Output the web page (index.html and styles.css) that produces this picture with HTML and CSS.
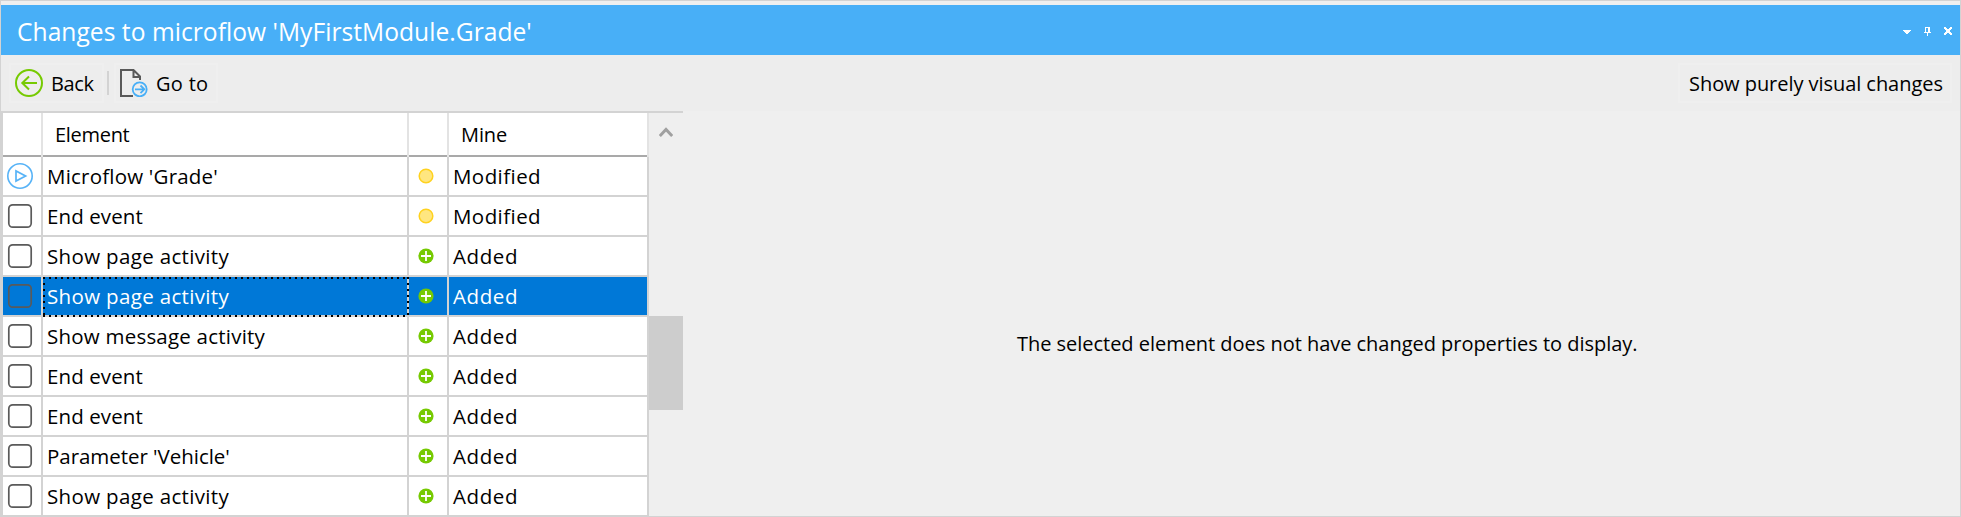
FILE: index.html
```
<!DOCTYPE html>
<html lang="en">
<head>
<meta charset="utf-8">
<title>Changes to microflow</title>
<link rel="stylesheet" href="styles.css">
</head>
<body>
<svg class="defs" width="0" height="0" aria-hidden="true">
  <symbol id="box" viewBox="0 0 26 26"><rect x="1.8" y="1.8" width="22.4" height="22.4" rx="4" fill="none" stroke="#5a5a5a" stroke-width="1.7"/></symbol>
  <symbol id="play" viewBox="0 0 26 26"><circle cx="13" cy="13" r="12.2" fill="none" stroke="#57b3f7" stroke-width="1.6"/><path d="M9 8v10l9.6-5z" fill="none" stroke="#57b3f7" stroke-width="1.7"/></symbol>
  <symbol id="mod" viewBox="0 0 16 16"><circle cx="8" cy="8" r="6.8" fill="#ffe680" stroke="#ffd21f" stroke-width="1.5"/></symbol>
  <symbol id="add" viewBox="0 0 16 16"><circle cx="8" cy="8" r="7.6" fill="#76ca02"/><path d="M3 8h10M8 3v10" stroke="#fff" stroke-width="1.8"/></symbol>
</svg>
<div class="window">
  <header class="titlebar">
    <h1 class="title">Changes to microflow 'MyFirstModule.Grade'</h1>
    <div class="controls">
      <svg width="8" height="4" viewBox="0 0 8 4"><path d="M0 0h8v1H7v1H6v1H5v1H3V3H2V2H1V1H0z" fill="#fff"/></svg>
      <svg width="7" height="9" viewBox="0 0 7 9"><path d="M1 0h5v5h1v1H4v3H3V6H0V5h1zM2 1v4h2V1z" fill="#fff" fill-rule="evenodd"/></svg>
      <svg width="8" height="8" viewBox="0 0 8 8"><path d="M0 0h2v1h1v1h2V1h1V0h2v2H7v1H6v2h1v1h1v2H6V7H5V6H3v1H2v1H0V6h1V5h1V3H1V2H0z" fill="#fff"/></svg>
    </div>
  </header>
  <nav class="toolbar">
    <div class="button back">
      <svg width="28" height="28" viewBox="0 0 28 28" fill="none" stroke="#76ca02" stroke-width="2"><circle cx="14" cy="14" r="13"/><path d="M22 14H7.5M14 7.5L7.3 14l6.7 6.5"/></svg>
      <span>Back</span>
    </div>
    <div class="separator"></div>
    <div class="button goto">
      <svg width="28" height="28" viewBox="0 0 28 28" fill="none" stroke="#595959" stroke-width="2"><path d="M13 27H1V1h12.5L20 7.5V11M13.5 1v7H20"/><g stroke="#48aff7" stroke-width="1.8"><circle cx="19.7" cy="20.3" r="7"/><path d="M15 20.3h9M20.5 16.5l3.8 3.8-3.8 3.8"/></g></svg>
      <span>Go to</span>
    </div>
    <div class="button visual"><span>Show purely visual changes</span></div>
  </nav>
  <main class="content">
    <section class="grid">
      <div class="row head"><div class="cell"></div><div class="cell element">Element</div><div class="cell"></div><div class="cell mine">Mine</div></div>
      <div class="row"><div class="cell icon"><svg width="26" height="26"><use href="#play"/></svg></div><div class="cell microflow">Microflow 'Grade'</div><div class="cell state"><svg width="16" height="16"><use href="#mod"/></svg></div><div class="cell modified">Modified</div></div>
      <div class="row"><div class="cell icon"><svg width="26" height="26"><use href="#box"/></svg></div><div class="cell end">End event</div><div class="cell state"><svg width="16" height="16"><use href="#mod"/></svg></div><div class="cell modified">Modified</div></div>
      <div class="row"><div class="cell icon"><svg width="26" height="26"><use href="#box"/></svg></div><div class="cell page">Show page activity</div><div class="cell state"><svg width="16" height="16"><use href="#add"/></svg></div><div class="cell added">Added</div></div>
      <div class="row selected"><div class="cell icon"><svg width="26" height="26"><use href="#box"/></svg></div><div class="cell page focus">Show page activity</div><div class="cell state"><svg width="16" height="16"><use href="#add"/></svg></div><div class="cell added">Added</div></div>
      <div class="row"><div class="cell icon"><svg width="26" height="26"><use href="#box"/></svg></div><div class="cell message">Show message activity</div><div class="cell state"><svg width="16" height="16"><use href="#add"/></svg></div><div class="cell added">Added</div></div>
      <div class="row"><div class="cell icon"><svg width="26" height="26"><use href="#box"/></svg></div><div class="cell end">End event</div><div class="cell state"><svg width="16" height="16"><use href="#add"/></svg></div><div class="cell added">Added</div></div>
      <div class="row"><div class="cell icon"><svg width="26" height="26"><use href="#box"/></svg></div><div class="cell end">End event</div><div class="cell state"><svg width="16" height="16"><use href="#add"/></svg></div><div class="cell added">Added</div></div>
      <div class="row"><div class="cell icon"><svg width="26" height="26"><use href="#box"/></svg></div><div class="cell parameter">Parameter 'Vehicle'</div><div class="cell state"><svg width="16" height="16"><use href="#add"/></svg></div><div class="cell added">Added</div></div>
      <div class="row"><div class="cell icon"><svg width="26" height="26"><use href="#box"/></svg></div><div class="cell page">Show page activity</div><div class="cell state"><svg width="16" height="16"><use href="#add"/></svg></div><div class="cell added">Added</div></div>
    </section>
    <div class="scrollbar">
      <svg width="14" height="10" viewBox="0 0 14 10"><path d="M0.8 9L7 2.4 13.2 9" fill="none" stroke="#a0a0a0" stroke-width="3"/></svg>
      <div class="thumb"></div>
    </div>
    <section class="details"><p class="message-text">The selected element does not have changed properties to display.</p></section>
  </main>
</div>
</body>
</html>
```
FILE: styles.css
```
* { box-sizing: border-box; }
body {
  margin: 0;
  font: 20px "Open Sans", "Noto Sans", sans-serif;
  color: #000;
  overflow: hidden;
}
.defs { display: block; }
svg { display: block; flex: none; }
.window {
  width: 1961px;
  height: 517px;
  background: #efefef;
  border: 1px solid #d3d3d3;
  padding-top: 4px;
  margin-top: -1px;
  height: 518px;
  border-top-width: 2px;
  display: flex;
  flex-direction: column;
}
.titlebar {
  height: 50px;
  flex: none;
  background: #48aff7;
  color: #fff;
  display: flex;
  justify-content: space-between;
  padding: 3px 8px 0 16px;
}
.title {
  margin: 0;
  font-size: 24.6px;
  font-weight: 400;
  line-height: 47px;
  letter-spacing: 0.03px;
}
.controls { display: flex; padding-top: 19px; }
.controls svg:nth-child(1) { margin: 3px 13px 0 0; }
.controls svg:nth-child(2) { margin-right: 13px; }
.toolbar {
  height: 56px;
  flex: none;
  background: #ededed;
  display: flex;
  padding: 8px 8px 0;
}
.button {
  height: 40px;
  border: 2px solid #efefef;
  display: flex;
  white-space: nowrap;
  line-height: 36px;
}
.button svg { margin-top: 4px; }
.button span { padding-top: 1px; }
.back { width: 95px; padding-left: 4px; }
.back span { margin-left: 8px; letter-spacing: -0.4px; }
.separator { width: 2px; height: 24px; margin: 8px 5px 0 3px; background: #d3d3d3; }
.goto { width: 104px; padding-left: 4px; }
.goto span { margin-left: 8px; letter-spacing: 0.3px; }
.visual { width: 274px; margin-left: auto; padding-left: 9px; letter-spacing: -0.05px; }
.content { flex: 1; display: flex; min-height: 0; }
.grid {
  width: 648px;
  padding: 2px 2px 0;
  background: #d3d3d3;
}
.row {
  display: grid;
  grid-template-columns: 38px 364px 38px 198px;
  gap: 2px;
  height: 38px;
  margin-bottom: 2px;
  font-size: 20.5px;
}
.cell {
  position: relative;
  background: #fff;
  line-height: 36px;
  padding: 1px 0 0 4px;
  white-space: nowrap;
}
.head { height: 44px; margin: 0 -2px 0 0; padding-right: 2px; background: #e3e3e3; font-size: 20px; }
.head .cell { line-height: 40px; padding-top: 2px; border-bottom: 2px solid #a9a9a9; }
.row .element { padding-left: 12px; letter-spacing: -0.3px; }
.row .mine { padding-left: 12px; letter-spacing: -0.1px; }
.row .icon { padding: 6px 0 0 4px; }
.row .state { padding: 11px 0 0 9px; }
.microflow { letter-spacing: 0.21px; }
.end { letter-spacing: 0.1px; }
.page { letter-spacing: 0.34px; }
.message { letter-spacing: 0.22px; }
.parameter { letter-spacing: -0.04px; }
.modified { letter-spacing: 0.43px; }
.added { letter-spacing: 0.6px; }
.selected .cell { background: #0078d7; color: #fff; }
.focus::after {
  content: "";
  position: absolute;
  inset: 0 -2px -2px 0;
  background:
    repeating-linear-gradient(90deg, #000 0 2px, transparent 2px 6px) 0 0 / 100% 2px no-repeat,
    repeating-linear-gradient(90deg, #000 0 2px, transparent 2px 6px) 0 100% / 100% 2px no-repeat,
    repeating-linear-gradient(#000 0 2px, transparent 2px 6px) 0 0 / 2px 100% no-repeat,
    repeating-linear-gradient(#000 0 2px, transparent 2px 6px) 100% 0 / 2px 100% no-repeat;
}
.scrollbar { width: 34px; border-top: 2px solid #d3d3d3; }
.scrollbar svg { margin: 14px 0 0 10px; }
.thumb { height: 94px; margin-top: 179px; background: #cdcdcd; }
.details { flex: 1; }
.message-text {
  margin: 208px 0 0;
  padding-left: 334px;
  line-height: 50px;
  letter-spacing: -0.03px;
}
```
